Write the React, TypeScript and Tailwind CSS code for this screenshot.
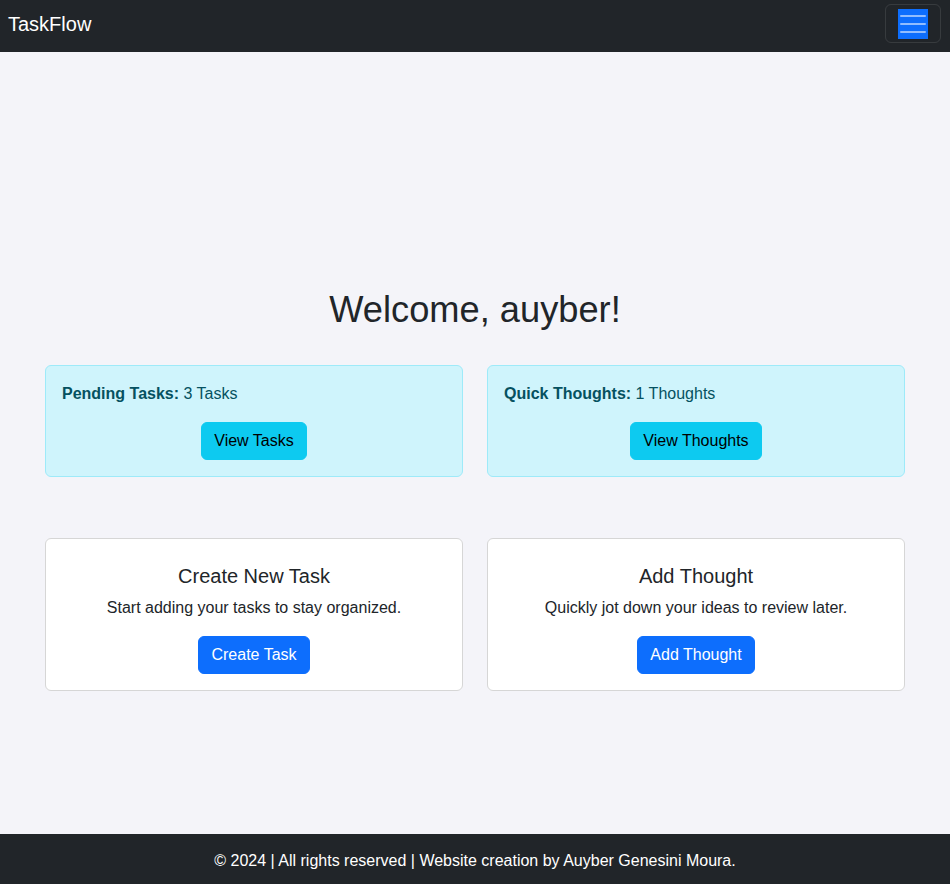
export default function App() {
  const font = { fontFamily: '"Liberation Sans", Arial, sans-serif' };
  return (
    <div className="min-h-screen flex flex-col bg-[#f4f4f9] text-[#212529]" style={font}>
      {/* Navbar */}
      <header className="h-[52px] bg-[#212529] px-2 pt-1">
        <div className="flex items-center justify-between h-[39px]">
          <span className="text-[20px] leading-[30px] text-white">TaskFlow</span>
          <button className="h-[39px] px-3 py-1 rounded-md border border-white/10 mr-px">
            <span className="block w-[30px] h-[30px] bg-[#0d6efd]">
              <svg width="30" height="30" viewBox="0 0 30 30">
                <path
                  d="M3 7h24M3 15h24M3 23h24"
                  stroke="rgba(255,255,255,0.55)"
                  strokeWidth="2"
                  strokeLinecap="round"
                />
              </svg>
            </span>
          </button>
        </div>
      </header>

      {/* Main */}
      <main className="flex-1 px-[45px] pt-[236px]">
        <h1 className="text-[36.25px] leading-[1.2] text-center">Welcome, auyber!</h1>

        <div className="grid grid-cols-2 gap-6 mt-[33px]">
          <div className="rounded-md border border-[#9eeaf9] bg-[#cff4fc] text-[#055160] p-4">
            <p className="text-base leading-6 mb-4">
              <strong>Pending Tasks:</strong> 3 Tasks
            </p>
            <div className="flex justify-center">
              <button className="rounded-md bg-[#0dcaf0] border border-[#0dcaf0] text-black px-3 py-1.5 text-base leading-6">
                View Tasks
              </button>
            </div>
          </div>
          <div className="rounded-md border border-[#9eeaf9] bg-[#cff4fc] text-[#055160] p-4">
            <p className="text-base leading-6 mb-4">
              <strong>Quick Thoughts:</strong> 1 Thoughts
            </p>
            <div className="flex justify-center">
              <button className="rounded-md bg-[#0dcaf0] border border-[#0dcaf0] text-black px-3 py-1.5 text-base leading-6">
                View Thoughts
              </button>
            </div>
          </div>
        </div>

        <div className="grid grid-cols-2 gap-6 mt-[61px]">
          <div className="rounded-md border border-[#d6d6d6] bg-white text-center px-4 pt-[25px] pb-4">
            <h5 className="text-[20px] leading-6 mb-2">Create New Task</h5>
            <p className="text-base leading-6 mb-4">Start adding your tasks to stay organized.</p>
            <button className="rounded-md bg-[#0d6efd] border border-[#0d6efd] text-white px-3 py-1.5 text-base leading-6">
              Create Task
            </button>
          </div>
          <div className="rounded-md border border-[#d6d6d6] bg-white text-center px-4 pt-[25px] pb-4">
            <h5 className="text-[20px] leading-6 mb-2">Add Thought</h5>
            <p className="text-base leading-6 mb-4">Quickly jot down your ideas to review later.</p>
            <button className="rounded-md bg-[#0d6efd] border border-[#0d6efd] text-white px-3 py-1.5 text-base leading-6">
              Add Thought
            </button>
          </div>
        </div>
      </main>

      {/* Footer */}
      <footer className="h-[50px] bg-[#212529] text-white text-center text-base leading-6 pt-[15px]">
        © 2024 | All rights reserved | Website creation by Auyber Genesini Moura.
      </footer>
    </div>
  );
}
